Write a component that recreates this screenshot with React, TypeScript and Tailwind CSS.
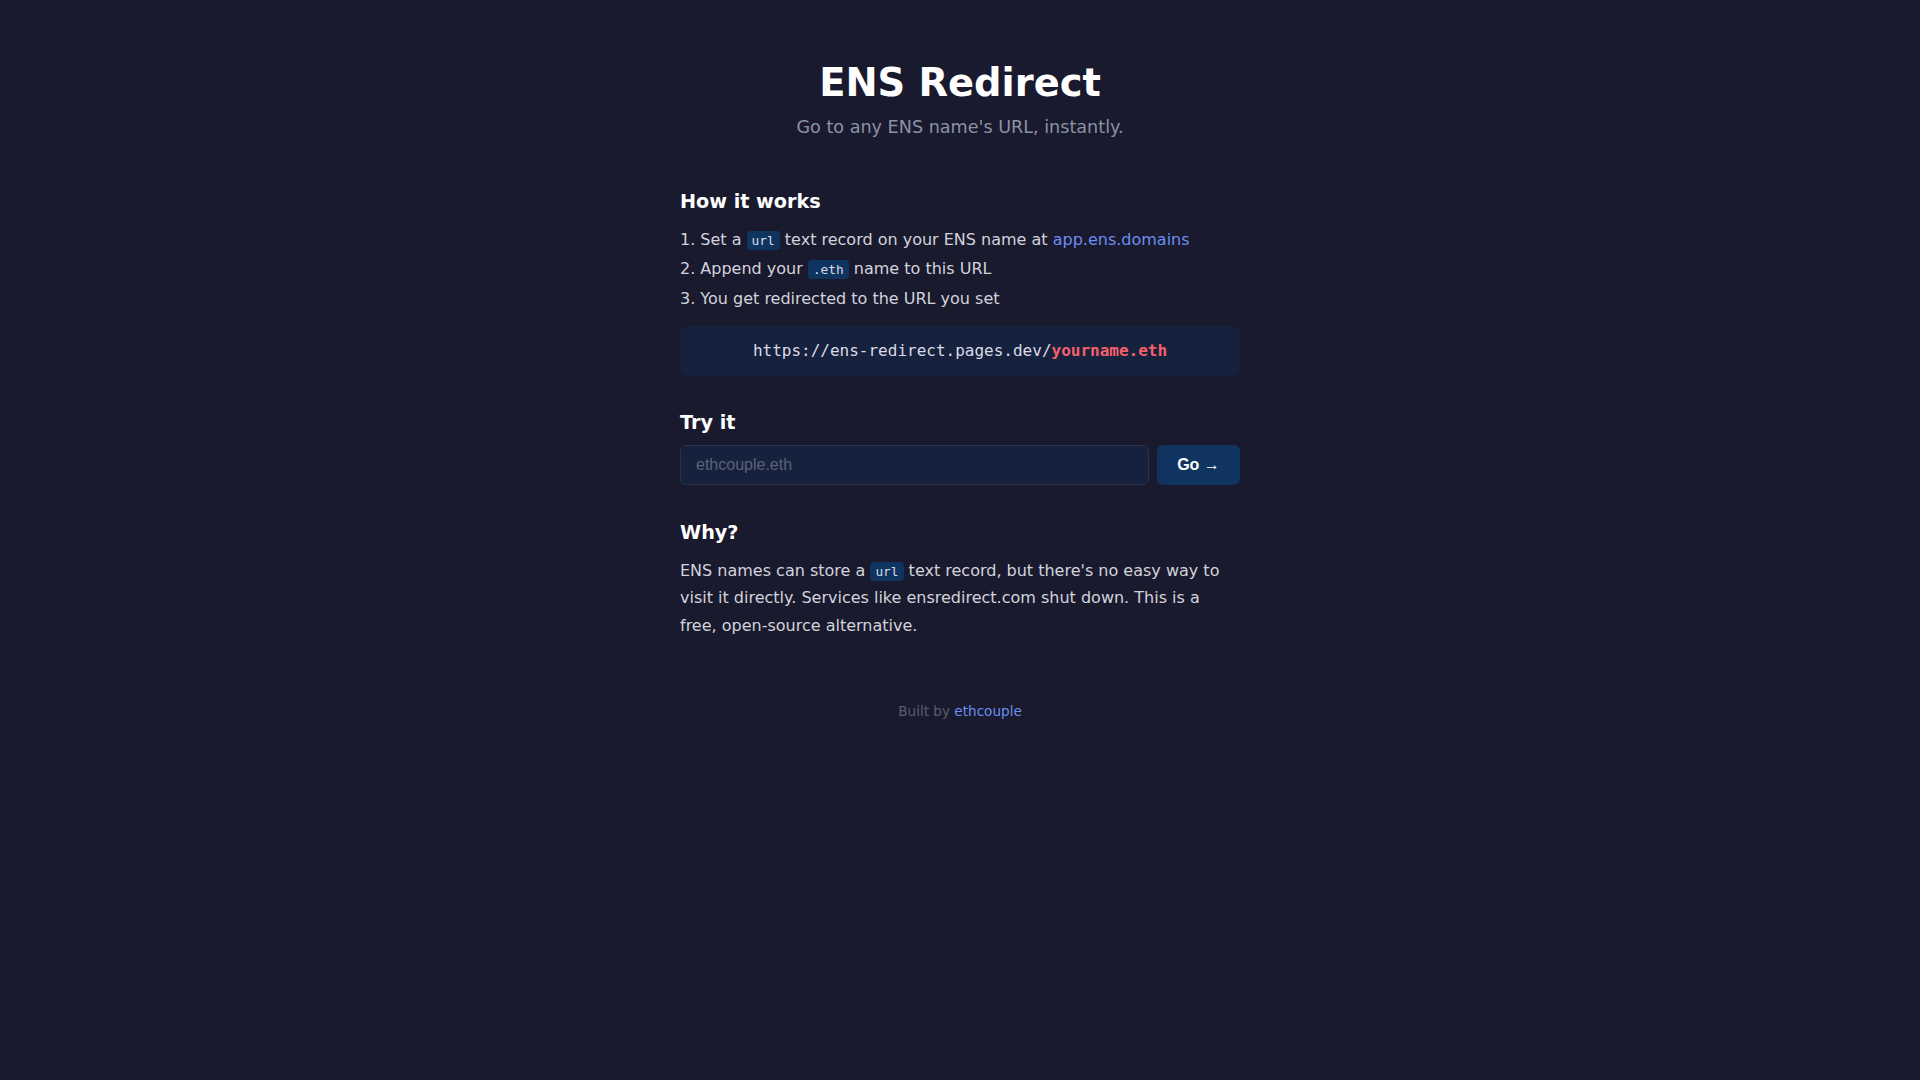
import React, { useState } from 'react';

const sans = "font-['DejaVu_Sans',sans-serif]";
const mono = "font-['DejaVu_Sans_Mono',monospace]";

function Code({ children }: { children: React.ReactNode }) {
  return (
    <code className={`${mono} text-[12.8px] bg-[#0f3460] text-[#d8dbe6] px-[5px] py-[2px] rounded`}>
      {children}
    </code>
  );
}

export default function App() {
  const [name, setName] = useState('');

  return (
    <div className={`min-h-screen bg-[#1a1a2e] text-[#d2d3dc] ${sans}`}>
      <div className="max-w-[560px] mx-auto pt-[59.5px] pb-12">
        {/* Header */}
        <header className="text-center">
          <h1 className="text-[38.4px] leading-[1.2] font-bold text-white">ENS Redirect</h1>
          <p className="mt-2 text-[17.6px] leading-[1.5] text-[#8a92a6]">
            Go to any ENS name's URL, instantly.
          </p>
        </header>

        {/* How it works */}
        <section className="mt-12">
          <h2 className="text-[19.2px] leading-[1.5] font-bold text-white">How it works</h2>
          <ol className="mt-2 text-base leading-[1.85]">
            <li>
              1. Set a <Code>url</Code> text record on your ENS name at{' '}
              <a href="#" className="text-[#6b8ef0]">app.ens.domains</a>
            </li>
            <li>
              2. Append your <Code>.eth</Code> name to this URL
            </li>
            <li>3. You get redirected to the URL you set</li>
          </ol>
          <div className={`mt-3 bg-[#16213e] rounded-lg py-[13px] text-center ${mono} text-base leading-6 text-[#d8dbe6]`}>
            https://ens-redirect.pages.dev/<span className="text-[#f5606b] font-bold">yourname.eth</span>
          </div>
        </section>

        {/* Try it */}
        <section className="mt-[33px]">
          <h2 className="text-[19.2px] leading-[1.5] font-bold text-white">Try it</h2>
          <div className="mt-2 flex gap-2">
            <input
              value={name}
              onChange={(e) => setName(e.target.value)}
              placeholder="ethcouple.eth"
              className="flex-1 h-10 px-[15px] bg-[#16213e] border border-[#2c3148] rounded-md text-base text-white placeholder-[#5b6177] outline-none font-['Liberation_Sans',Arial,sans-serif]"
            />
            <button className="w-[83px] h-10 bg-[#0f3460] rounded-md text-base font-bold text-white font-['Liberation_Sans',Arial,sans-serif]">
              Go →
            </button>
          </div>
        </section>

        {/* Why */}
        <section className="mt-[34px]">
          <h2 className="text-[19.2px] leading-[1.5] font-bold text-white">Why?</h2>
          <p className="mt-[9px] text-base leading-[1.7]">
            ENS names can store a <Code>url</Code> text record, but there's no easy way to visit it
            directly. Services like ensredirect.com shut down. This is a free, open-source
            alternative.
          </p>
        </section>

        <footer className="mt-[62px] text-center text-[13.6px] text-[#585d72]">
          Built by <a href="#" className="text-[#6b8ef0]">ethcouple</a>
        </footer>
      </div>
    </div>
  );
}
